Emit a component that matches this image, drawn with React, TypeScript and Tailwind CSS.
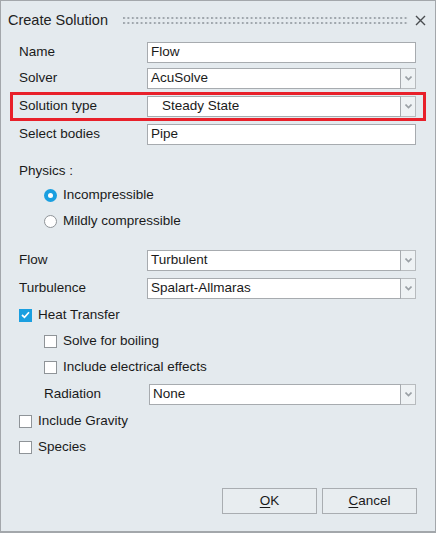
import React from "react";

const font = { fontFamily: '"Liberation Sans", Arial, sans-serif' };

function Chevron() {
  return (
    <svg width="7" height="5" viewBox="0 0 7 5" className="text-[#9aa0a5]">
      <path d="M0.5 0.5 L3.5 3.5 L6.5 0.5" fill="none" stroke="currentColor" strokeWidth="1.6" />
    </svg>
  );
}

function TextBox({ value, indent = false }: { value: string; indent?: boolean }) {
  return (
    <div className="flex-1 h-[21px] bg-white border border-[#a7abaf] flex items-center">
      <span className={indent ? "pl-[14px]" : "pl-[3px]"}>{value}</span>
    </div>
  );
}

function Combo({ value, indent = false }: { value: string; indent?: boolean }) {
  return (
    <div className="flex-1 h-[21px] flex">
      <div className="flex-1 bg-white border border-[#a7abaf] flex items-center">
        <span className={indent ? "pl-[14px]" : "pl-[3px]"}>{value}</span>
      </div>
      <div className="w-[15px] border border-l-0 border-[#b7bbbe] bg-[#eef2f4] flex items-center justify-center">
        <Chevron />
      </div>
    </div>
  );
}

function Row({ label, children, labelWidth = "w-[128px]" }: { label: string; children: React.ReactNode; labelWidth?: string }) {
  return (
    <div className="flex items-center">
      <div className={labelWidth}>{label}</div>
      {children}
    </div>
  );
}

function CheckBox({ checked = false }: { checked?: boolean }) {
  if (checked) {
    return (
      <div className="w-[13px] h-[13px] bg-[#1a9fe0] flex items-center justify-center">
        <svg width="9" height="8" viewBox="0 0 9 8">
          <path d="M1 4 L3.5 6.3 L8 1.3" fill="none" stroke="white" strokeWidth="1.7" />
        </svg>
      </div>
    );
  }
  return <div className="w-[13px] h-[13px] bg-white border border-[#8f9498]" />;
}

function Radio({ checked = false }: { checked?: boolean }) {
  if (checked) {
    return (
      <div className="w-[13px] h-[13px] rounded-full bg-[#1a9fe0] flex items-center justify-center">
        <div className="w-[5px] h-[5px] rounded-full bg-white" />
      </div>
    );
  }
  return <div className="w-[13px] h-[13px] rounded-full bg-white border border-[#8f9498]" />;
}

export default function App() {
  return (
    <div
      style={font}
      className="w-[436px] h-[533px] bg-[#e4eaee] border border-[#a3a7ab] border-b-2 text-[13.5px] text-[#1a1a1a] flex flex-col"
    >
      {/* Title bar */}
      <div className="h-[39px] flex items-center pl-[7px] pr-[9px]">
        <span className="text-[14.5px] text-[#222]">Create Solution</span>
        <svg className="ml-[15px]" width="286" height="8" viewBox="0 0 286 8">
          <defs>
            <pattern id="grip" width="4.4" height="5" patternUnits="userSpaceOnUse">
              <rect x="0" y="0" width="2" height="2" fill="#a0a7ad" />
            </pattern>
          </defs>
          <rect x="0" y="0" width="286" height="8" fill="url(#grip)" />
        </svg>
        <div className="flex-1" />
        <svg width="11" height="11" viewBox="0 0 11 11">
          <path d="M1 1 L10 10 M10 1 L1 10" stroke="#4a4d50" strokeWidth="1.4" />
        </svg>
      </div>

      {/* Form */}
      <div className="pl-[18px] pr-[19px] flex flex-col">
        <div className="mt-[2px]">
          <Row label="Name">
            <TextBox value="Flow" />
          </Row>
        </div>
        <div className="mt-[5px]">
          <Row label="Solver">
            <Combo value="AcuSolve" />
          </Row>
        </div>
        <div className="mt-[3px] -ml-[9px] -mr-[10px] border-[3px] border-[#e8202a] pl-[6px] pr-[7px] py-[1px]">
          <Row label="Solution type">
            <Combo value="Steady State" indent />
          </Row>
        </div>
        <div className="mt-[3px]">
          <Row label="Select bodies">
            <TextBox value="Pipe" />
          </Row>
        </div>

        <div className="mt-[18px] h-[16px] flex items-center">Physics :</div>
        <div className="ml-[25px] mt-[8px] h-[16px] flex items-center gap-[6px]">
          <Radio checked />
          <span>Incompressible</span>
        </div>
        <div className="ml-[25px] mt-[10px] h-[16px] flex items-center gap-[6px]">
          <Radio />
          <span>Mildly compressible</span>
        </div>

        <div className="mt-[21px]">
          <Row label="Flow">
            <Combo value="Turbulent" />
          </Row>
        </div>
        <div className="mt-[7px]">
          <Row label="Turbulence">
            <Combo value="Spalart-Allmaras" />
          </Row>
        </div>

        <div className="mt-[8px] h-[16px] flex items-center gap-[6px]">
          <CheckBox checked />
          <span>Heat Transfer</span>
        </div>
        <div className="ml-[25px] mt-[10px] h-[16px] flex items-center gap-[6px]">
          <CheckBox />
          <span>Solve for boiling</span>
        </div>
        <div className="ml-[25px] mt-[10px] h-[16px] flex items-center gap-[6px]">
          <CheckBox />
          <span>Include electrical effects</span>
        </div>
        <div className="ml-[25px] mt-[9px]">
          <Row label="Radiation" labelWidth="w-[105px]">
            <Combo value="None" />
          </Row>
        </div>
        <div className="mt-[8px] h-[16px] flex items-center gap-[6px]">
          <CheckBox />
          <span>Include Gravity</span>
        </div>
        <div className="mt-[10px] h-[16px] flex items-center gap-[6px]">
          <CheckBox />
          <span>Species</span>
        </div>

        <div className="mt-[33px] -mr-[1px] flex justify-end gap-[5px]">
          <button className="w-[95px] h-[26px] bg-[#e8edf0] border border-[#a9adb1] text-[#1a1a1a]">
            <span className="underline underline-offset-2">O</span>K
          </button>
          <button className="w-[95px] h-[26px] bg-[#e8edf0] border border-[#a9adb1] text-[#1a1a1a]">
            <span className="underline underline-offset-2">C</span>ancel
          </button>
        </div>
      </div>
    </div>
  );
}
